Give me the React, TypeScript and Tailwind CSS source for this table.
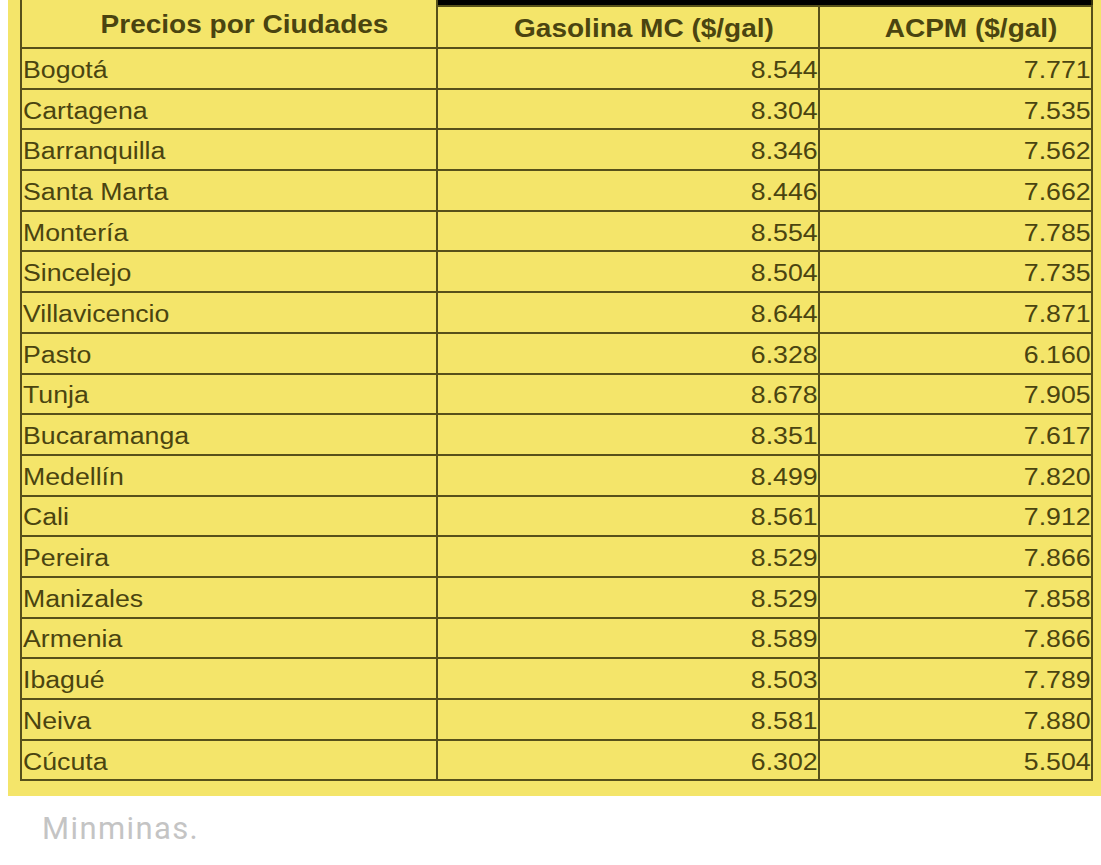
import type { ReactNode } from "react";

type Row = { city: string; gas: string; acpm: string };

const rows: Row[] = [
  { city: "Bogotá", gas: "8.544", acpm: "7.771" },
  { city: "Cartagena", gas: "8.304", acpm: "7.535" },
  { city: "Barranquilla", gas: "8.346", acpm: "7.562" },
  { city: "Santa Marta", gas: "8.446", acpm: "7.662" },
  { city: "Montería", gas: "8.554", acpm: "7.785" },
  { city: "Sincelejo", gas: "8.504", acpm: "7.735" },
  { city: "Villavicencio", gas: "8.644", acpm: "7.871" },
  { city: "Pasto", gas: "6.328", acpm: "6.160" },
  { city: "Tunja", gas: "8.678", acpm: "7.905" },
  { city: "Bucaramanga", gas: "8.351", acpm: "7.617" },
  { city: "Medellín", gas: "8.499", acpm: "7.820" },
  { city: "Cali", gas: "8.561", acpm: "7.912" },
  { city: "Pereira", gas: "8.529", acpm: "7.866" },
  { city: "Manizales", gas: "8.529", acpm: "7.858" },
  { city: "Armenia", gas: "8.589", acpm: "7.866" },
  { city: "Ibagué", gas: "8.503", acpm: "7.789" },
  { city: "Neiva", gas: "8.581", acpm: "7.880" },
  { city: "Cúcuta", gas: "6.302", acpm: "5.504" },
];

function Cell({ children, right = false }: { children: ReactNode; right?: boolean }) {
  return (
    <td
      className={`h-[40.7px] border-2 border-[#57501a] p-0 align-middle text-[23px] leading-none text-[#4a4410] ${
        right ? "text-right" : "pl-[1px] text-left"
      }`}
    >
      <span
        className={`relative top-[2px] inline-block scale-x-[1.16] ${
          right ? "origin-right" : "origin-left"
        }`}
      >
        {children}
      </span>
    </td>
  );
}

function HeadText({ children }: { children: ReactNode }) {
  return <span className="relative top-[1px] inline-block scale-x-[1.12]">{children}</span>;
}

export default function App() {
  return (
    <div className="min-h-[865px] w-[1101px] bg-white font-['Liberation_Sans',Arial,sans-serif]">
      <div className="ml-2 bg-[#f4e56a] pb-[15px] pl-3 pr-[10px]">
        <table className="w-[1071px] table-fixed border-collapse border-2 border-t-0 border-[#34300c]">
          <colgroup>
            <col className="w-[416px]" />
            <col className="w-[382px]" />
            <col className="w-[273px]" />
          </colgroup>
          <thead>
            <tr>
              <th
                rowSpan={2}
                className="border-2 border-t-0 border-[#57501a] pl-8 text-center align-middle text-[25px] font-bold leading-none text-[#4a4410]"
              >
                <HeadText>Precios por Ciudades</HeadText>
              </th>
              <th colSpan={2} className="h-[6px] bg-black p-0" />
            </tr>
            <tr>
              <th className="h-[42px] border-2 border-[#57501a] pl-8 text-center align-middle text-[25px] font-bold leading-none text-[#4a4410]">
                <HeadText>Gasolina MC ($/gal)</HeadText>
              </th>
              <th className="h-[42px] border-2 border-[#57501a] pl-8 text-center align-middle text-[25px] font-bold leading-none text-[#4a4410]">
                <HeadText>ACPM ($/gal)</HeadText>
              </th>
            </tr>
          </thead>
          <tbody>
            {rows.map((r) => (
              <tr key={r.city}>
                <Cell>{r.city}</Cell>
                <Cell right>{r.gas}</Cell>
                <Cell right>{r.acpm}</Cell>
              </tr>
            ))}
          </tbody>
        </table>
      </div>
      <p className="mt-[17px] pl-[42px] font-['Roboto',sans-serif] text-[31px] leading-none tracking-[0.045em] text-[#c4c4c4]">
        Minminas.
      </p>
    </div>
  );
}
